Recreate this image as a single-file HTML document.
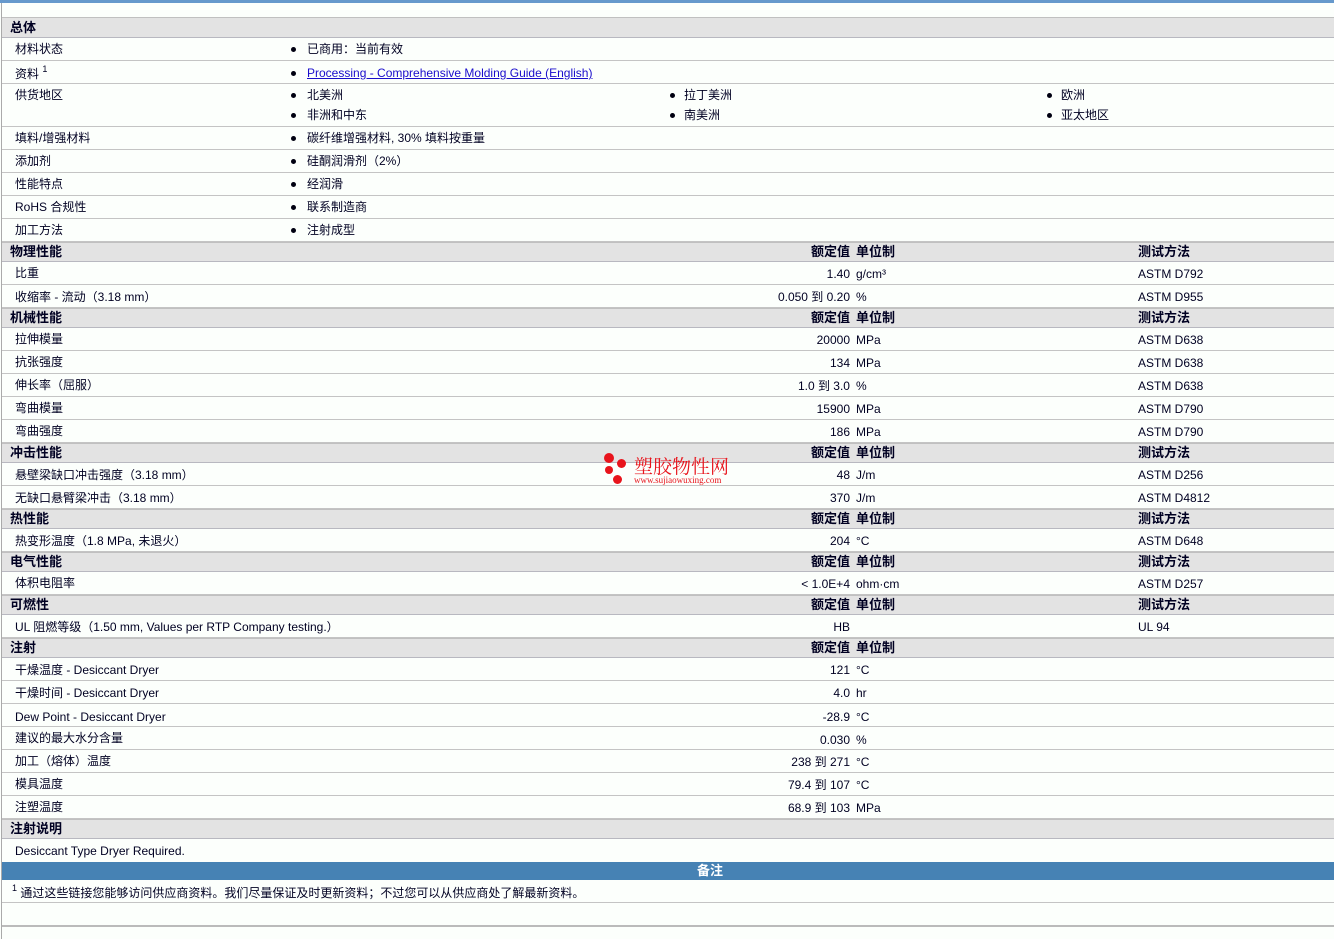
<!DOCTYPE html>
<html><head><meta charset="utf-8"><style>
*{margin:0;padding:0;box-sizing:border-box}
body{width:1334px;height:939px;overflow:hidden;background:#fcfffc;font-family:"Liberation Sans","Noto Sans CJK SC",sans-serif;font-size:12px;color:#000022;position:relative}
.top{position:absolute;left:0;top:0;width:1334px;height:3px;background:#6699cc}
.lb{position:absolute;left:1px;top:3px;width:1px;height:936px;background:#aaa}
.r{position:absolute;left:2px;width:1332px;border-bottom:1px solid #c4c4c4}
.h{background:#e3e3e3;border-top:1px solid #c0c0c0;border-bottom:1px solid #b8b8c0;font-weight:bold;font-size:13px}
.r span{position:absolute;white-space:nowrap;line-height:14px}
.l{left:13px}.hl{left:8px}
.b1{left:289px}.b2{left:668px}.b3{left:1045px}
.b1::before,.b2::before,.b3::before{content:"";position:absolute;left:0;top:5px;width:5px;height:5px;border-radius:50%;background:#001}
.t1{left:305px}.t2{left:682px}.t3{left:1059px}
.v{right:484px;text-align:right}
.u{left:854px}.m{left:1136px}
a{color:#1a0dcc;text-decoration:underline}
sup{font-size:9px;vertical-align:baseline;position:relative;top:-6px;line-height:0}
.blue{position:absolute;left:2px;width:1332px;background:#4682b4;color:#fff;text-align:center;font-weight:bold;font-size:13px;padding-left:84px}
</style></head><body>
<div class="top"></div><div class="lb"></div>

<div class="r h" style="top:17px;height:21px"><span class="hl" style="top:3px">总体</span></div>
<div class="r" style="top:38px;height:23px"><span class="l" style="top:4px">材料状态</span><span class="b1" style="top:4px"></span><span class="t1" style="top:4px">已商用：当前有效</span></div>
<div class="r" style="top:61px;height:23px"><span class="l" style="top:6px">资料 <sup>1</sup></span><span class="b1" style="top:5px"></span><span class="t1" style="top:5px"><a>Processing - Comprehensive Molding Guide (English)</a></span></div>
<div class="r" style="top:84px;height:43px"><span class="l" style="top:4px">供货地区</span>
<span class="b1" style="top:4px"></span><span class="t1" style="top:4px">北美洲</span>
<span class="b2" style="top:4px"></span><span class="t2" style="top:4px">拉丁美洲</span>
<span class="b3" style="top:4px"></span><span class="t3" style="top:4px">欧洲</span>
<span class="b1" style="top:24px"></span><span class="t1" style="top:24px">非洲和中东</span>
<span class="b2" style="top:24px"></span><span class="t2" style="top:24px">南美洲</span>
<span class="b3" style="top:24px"></span><span class="t3" style="top:24px">亚太地区</span></div>
<div class="r" style="top:127px;height:23px"><span class="l" style="top:4px">填料/增强材料</span><span class="b1" style="top:4px"></span><span class="t1" style="top:4px">碳纤维增强材料, 30% 填料按重量</span></div>
<div class="r" style="top:150px;height:23px"><span class="l" style="top:4px">添加剂</span><span class="b1" style="top:4px"></span><span class="t1" style="top:4px">硅酮润滑剂（2%）</span></div>
<div class="r" style="top:173px;height:23px"><span class="l" style="top:4px">性能特点</span><span class="b1" style="top:4px"></span><span class="t1" style="top:4px">经润滑</span></div>
<div class="r" style="top:196px;height:23px"><span class="l" style="top:4px">RoHS 合规性</span><span class="b1" style="top:4px"></span><span class="t1" style="top:4px">联系制造商</span></div>
<div class="r" style="top:219px;height:23px"><span class="l" style="top:4px">加工方法</span><span class="b1" style="top:4px"></span><span class="t1" style="top:4px">注射成型</span></div>

<div class="r h" style="top:242px;height:20px"><span class="hl" style="top:2px">物理性能</span><span class="v" style="top:2px">额定值</span><span class="u" style="top:2px">单位制</span><span class="m" style="top:2px">测试方法</span></div>
<div class="r" style="top:262px;height:23px"><span class="l" style="top:4px">比重</span><span class="v" style="top:5px">1.40</span><span class="u" style="top:5px">g/cm³</span><span class="m" style="top:5px">ASTM D792</span></div>
<div class="r" style="top:285px;height:23px"><span class="l" style="top:5px">收缩率 - 流动（3.18 mm）</span><span class="v" style="top:5px">0.050 到 0.20</span><span class="u" style="top:5px">%</span><span class="m" style="top:5px">ASTM D955</span></div>

<div class="r h" style="top:308px;height:20px"><span class="hl" style="top:2px">机械性能</span><span class="v" style="top:2px">额定值</span><span class="u" style="top:2px">单位制</span><span class="m" style="top:2px">测试方法</span></div>
<div class="r" style="top:328px;height:23px"><span class="l" style="top:4px">拉伸模量</span><span class="v" style="top:5px">20000</span><span class="u" style="top:5px">MPa</span><span class="m" style="top:5px">ASTM D638</span></div>
<div class="r" style="top:351px;height:23px"><span class="l" style="top:4px">抗张强度</span><span class="v" style="top:5px">134</span><span class="u" style="top:5px">MPa</span><span class="m" style="top:5px">ASTM D638</span></div>
<div class="r" style="top:374px;height:23px"><span class="l" style="top:4px">伸长率（屈服）</span><span class="v" style="top:5px">1.0 到 3.0</span><span class="u" style="top:5px">%</span><span class="m" style="top:5px">ASTM D638</span></div>
<div class="r" style="top:397px;height:23px"><span class="l" style="top:4px">弯曲模量</span><span class="v" style="top:5px">15900</span><span class="u" style="top:5px">MPa</span><span class="m" style="top:5px">ASTM D790</span></div>
<div class="r" style="top:420px;height:23px"><span class="l" style="top:4px">弯曲强度</span><span class="v" style="top:5px">186</span><span class="u" style="top:5px">MPa</span><span class="m" style="top:5px">ASTM D790</span></div>

<div class="r h" style="top:443px;height:20px"><span class="hl" style="top:2px">冲击性能</span><span class="v" style="top:2px">额定值</span><span class="u" style="top:2px">单位制</span><span class="m" style="top:2px">测试方法</span></div>
<div class="r" style="top:463px;height:23px"><span class="l" style="top:5px">悬壁梁缺口冲击强度（3.18 mm）</span><span class="v" style="top:5px">48</span><span class="u" style="top:5px">J/m</span><span class="m" style="top:5px">ASTM D256</span></div>
<div class="r" style="top:486px;height:23px"><span class="l" style="top:5px">无缺口悬臂梁冲击（3.18 mm）</span><span class="v" style="top:5px">370</span><span class="u" style="top:5px">J/m</span><span class="m" style="top:5px">ASTM D4812</span></div>

<div class="r h" style="top:509px;height:20px"><span class="hl" style="top:2px">热性能</span><span class="v" style="top:2px">额定值</span><span class="u" style="top:2px">单位制</span><span class="m" style="top:2px">测试方法</span></div>
<div class="r" style="top:529px;height:23px"><span class="l" style="top:5px">热变形温度（1.8 MPa, 未退火）</span><span class="v" style="top:5px">204</span><span class="u" style="top:5px">°C</span><span class="m" style="top:5px">ASTM D648</span></div>

<div class="r h" style="top:552px;height:20px"><span class="hl" style="top:2px">电气性能</span><span class="v" style="top:2px">额定值</span><span class="u" style="top:2px">单位制</span><span class="m" style="top:2px">测试方法</span></div>
<div class="r" style="top:572px;height:23px"><span class="l" style="top:4px">体积电阻率</span><span class="v" style="top:5px">&lt; 1.0E+4</span><span class="u" style="top:5px">ohm·cm</span><span class="m" style="top:5px">ASTM D257</span></div>

<div class="r h" style="top:595px;height:20px"><span class="hl" style="top:2px">可燃性</span><span class="v" style="top:2px">额定值</span><span class="u" style="top:2px">单位制</span><span class="m" style="top:2px">测试方法</span></div>
<div class="r" style="top:615px;height:23px"><span class="l" style="top:5px">UL 阻燃等级（1.50 mm, Values per RTP Company testing.）</span><span class="v" style="top:5px">HB</span><span class="m" style="top:5px">UL 94</span></div>

<div class="r h" style="top:638px;height:20px"><span class="hl" style="top:2px">注射</span><span class="v" style="top:2px">额定值</span><span class="u" style="top:2px">单位制</span></div>
<div class="r" style="top:658px;height:23px"><span class="l" style="top:5px">干燥温度 - Desiccant Dryer</span><span class="v" style="top:5px">121</span><span class="u" style="top:5px">°C</span></div>
<div class="r" style="top:681px;height:23px"><span class="l" style="top:5px">干燥时间 - Desiccant Dryer</span><span class="v" style="top:5px">4.0</span><span class="u" style="top:5px">hr</span></div>
<div class="r" style="top:704px;height:23px"><span class="l" style="top:6px">Dew Point - Desiccant Dryer</span><span class="v" style="top:6px">-28.9</span><span class="u" style="top:6px">°C</span></div>
<div class="r" style="top:727px;height:23px"><span class="l" style="top:4px">建议的最大水分含量</span><span class="v" style="top:6px">0.030</span><span class="u" style="top:6px">%</span></div>
<div class="r" style="top:750px;height:23px"><span class="l" style="top:4px">加工（熔体）温度</span><span class="v" style="top:5px">238 到 271</span><span class="u" style="top:5px">°C</span></div>
<div class="r" style="top:773px;height:23px"><span class="l" style="top:4px">模具温度</span><span class="v" style="top:5px">79.4 到 107</span><span class="u" style="top:5px">°C</span></div>
<div class="r" style="top:796px;height:23px"><span class="l" style="top:4px">注塑温度</span><span class="v" style="top:5px">68.9 到 103</span><span class="u" style="top:5px">MPa</span></div>

<div class="r h" style="top:819px;height:20px"><span class="hl" style="top:2px">注射说明</span></div>
<div class="r" style="top:839px;height:23px;border-bottom:none"><span class="l" style="top:5px">Desiccant Type Dryer Required.</span></div>
<div class="blue" style="top:862px;height:18px;line-height:17px">备注</div>
<div class="r" style="top:880px;height:23px"><span style="left:10px;top:6px"><sup>1</sup> 通过这些链接您能够访问供应商资料。我们尽量保证及时更新资料；不过您可以从供应商处了解最新资料。</span></div>
<div class="r" style="top:903px;height:24px;border-bottom:2px solid #bbb"></div>

<div style="position:absolute;left:604px;top:453px;width:10px;height:10px;border-radius:50%;background:#e8141c"></div>
<div style="position:absolute;left:617px;top:459px;width:9px;height:9px;border-radius:50%;background:#e8141c"></div>
<div style="position:absolute;left:605px;top:466px;width:8px;height:8px;border-radius:50%;background:#e8141c"></div>
<div style="position:absolute;left:613px;top:475px;width:9px;height:9px;border-radius:50%;background:#e8141c"></div>
<div style="position:absolute;left:634px;top:455px;font-family:'Noto Serif CJK SC',serif;font-size:19px;color:#e8141c;line-height:22px">塑胶物性网</div>
<div style="position:absolute;left:634px;top:476px;font-family:'Liberation Serif',serif;font-size:9px;color:#e8141c;line-height:9px">www.sujiaowuxing.com</div>
</body></html>
